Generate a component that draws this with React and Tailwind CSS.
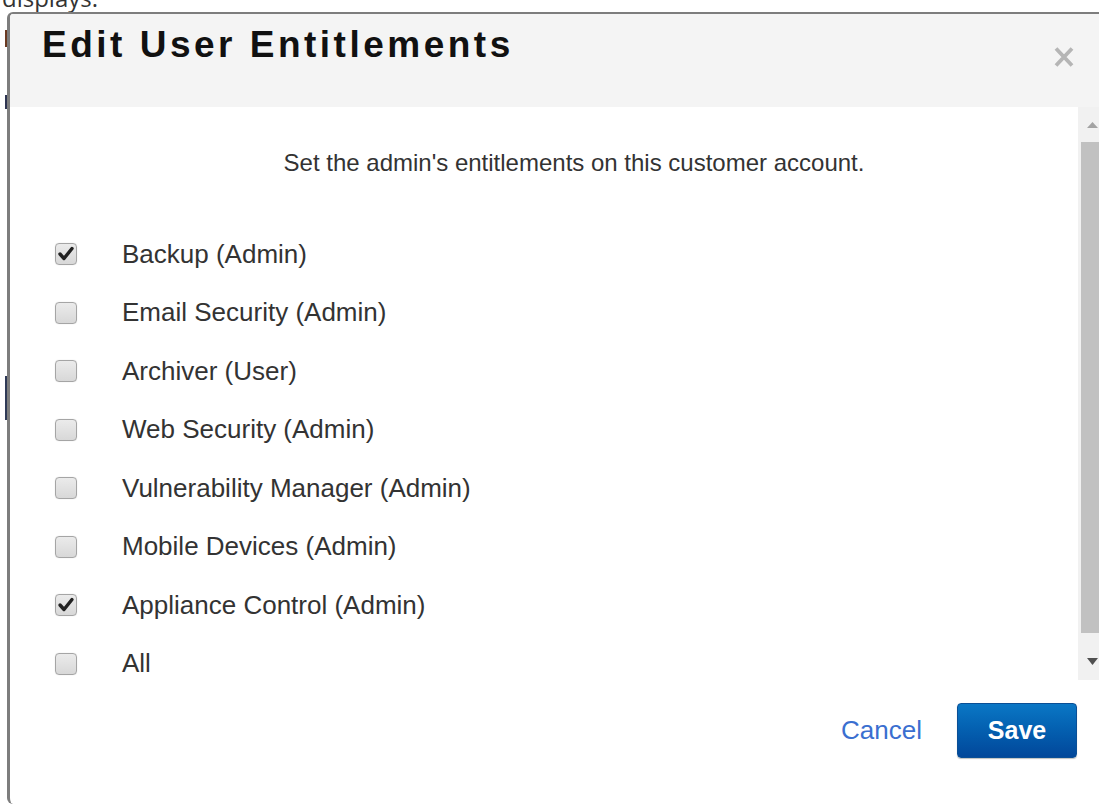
const entitlements = [
  ["Backup (Admin)", true],
  ["Email Security (Admin)", false],
  ["Archiver (User)", false],
  ["Web Security (Admin)", false],
  ["Vulnerability Manager (Admin)", false],
  ["Mobile Devices (Admin)", false],
  ["Appliance Control (Admin)", true],
  ["All", false],
];

function CheckBox({ checked }) {
  return (
    <span className="flex h-[22px] w-[22px] shrink-0 items-center justify-center rounded-[4px] border border-[#a5a5a5] bg-linear-to-b from-[#ebebeb] to-[#d8d8d8] shadow-[0_0_1px_rgba(0,0,0,0.2)]">
      {checked && (
        <svg width="22" height="22" viewBox="0 0 22 22" className="-m-px">
          <path
            d="M5 11 L9 15.5 L17 5.5"
            fill="none"
            stroke="#222"
            strokeWidth="3.4"
            strokeLinecap="round"
            strokeLinejoin="round"
          />
        </svg>
      )}
    </span>
  );
}

function Scrollbar() {
  return (
    <div className="flex w-[21px] shrink-0 flex-col bg-[#f1f1f1]">
      <div className="h-[35px] pl-[9px] pt-[15px]">
        <svg width="11" height="6" viewBox="0 0 11 6">
          <path d="M0 6 L5.5 0 L11 6 Z" fill="#a3a3a3" />
        </svg>
      </div>
      <div className="ml-[3px] h-[491px] bg-[#c1c1c1]" />
      <div className="flex-1 pl-[9px] pt-[25px]">
        <svg width="11" height="7" viewBox="0 0 11 7">
          <path d="M0 0 L11 0 L5.5 7 Z" fill="#505050" />
        </svg>
      </div>
    </div>
  );
}

export default function App() {
  return (
    <div className="relative h-[804px] w-[1099px] overflow-hidden bg-white font-['Liberation_Sans',Arial,sans-serif]">
      {/* page text behind the modal */}
      <div className="h-[12px] overflow-hidden">
        <div className="-mt-[18px] pl-[2px] text-[24px] leading-[32px] text-[#333] font-['Open_Sans',sans-serif]">
          displays.
        </div>
      </div>

      <div className="flex h-[792px]">
        {/* sliver of the underlying page on the left */}
        <div className="flex w-[7px] shrink-0 flex-col">
          <div className="h-[18px]" />
          <div className="ml-[5px] h-[17px] w-[2px] bg-[#6b3a22]" />
          <div className="h-[48px]" />
          <div className="ml-[5px] h-[14px] w-[2px] bg-[#2e3552]" />
          <div className="h-[267px]" />
          <div className="ml-[5px] h-[44px] w-[2px] bg-[#2f3a57]" />
        </div>

        {/* modal */}
        <div className="flex min-w-0 flex-1 flex-col overflow-hidden rounded-tl-[6px] rounded-bl-[6px] border-l-[3px] border-t-2 border-[#7d7d7d] bg-white">
          <div className="flex h-[93px] shrink-0 items-start justify-between bg-[#f4f4f4] pl-[32px] pr-[24px]">
            <h1 className="pt-[12px] text-[37px] font-bold leading-[37px] tracking-[3.5px] text-[#111]">
              Edit User Entitlements
            </h1>
            <button className="mt-[33px] flex h-[20px] w-[22px] items-center justify-center">
              <svg width="22" height="20" viewBox="0 0 22 20">
                <path
                  d="M3 1.5 L19 18.5 M19 1.5 L3 18.5"
                  stroke="#b5b5b5"
                  strokeWidth="3.8"
                />
              </svg>
            </button>
          </div>

          <div className="flex h-[573px] shrink-0">
            <div className="min-w-0 flex-1 overflow-hidden">
              <p className="pl-[60px] pt-[42px] text-center text-[24px] leading-[28px] text-[#333]">
                Set the admin's entitlements on this customer account.
              </p>
              <ul className="pt-[48px]">
                {entitlements.map(([label, checked]) => (
                  <li
                    key={label}
                    className="flex h-[58.5px] items-center gap-[45px] pl-[45px] text-[26px] text-[#333]"
                  >
                    <CheckBox checked={checked} />
                    <span>{label}</span>
                  </li>
                ))}
              </ul>
            </div>
            <Scrollbar />
          </div>

          <div className="flex items-start justify-end gap-[35px] pr-[22px] pt-[23px]">
            <button className="mt-[12px] text-[26px] leading-[30px] text-[#3a6fd0]">
              Cancel
            </button>
            <button className="h-[55px] w-[120px] rounded-[4px] border border-[#0a4f96] bg-linear-to-b from-[#0b77c5] to-[#02479a] text-[25px] font-bold text-white shadow-[0_1px_1px_rgba(0,0,0,0.25)]">
              Save
            </button>
          </div>
        </div>
      </div>
    </div>
  );
}
